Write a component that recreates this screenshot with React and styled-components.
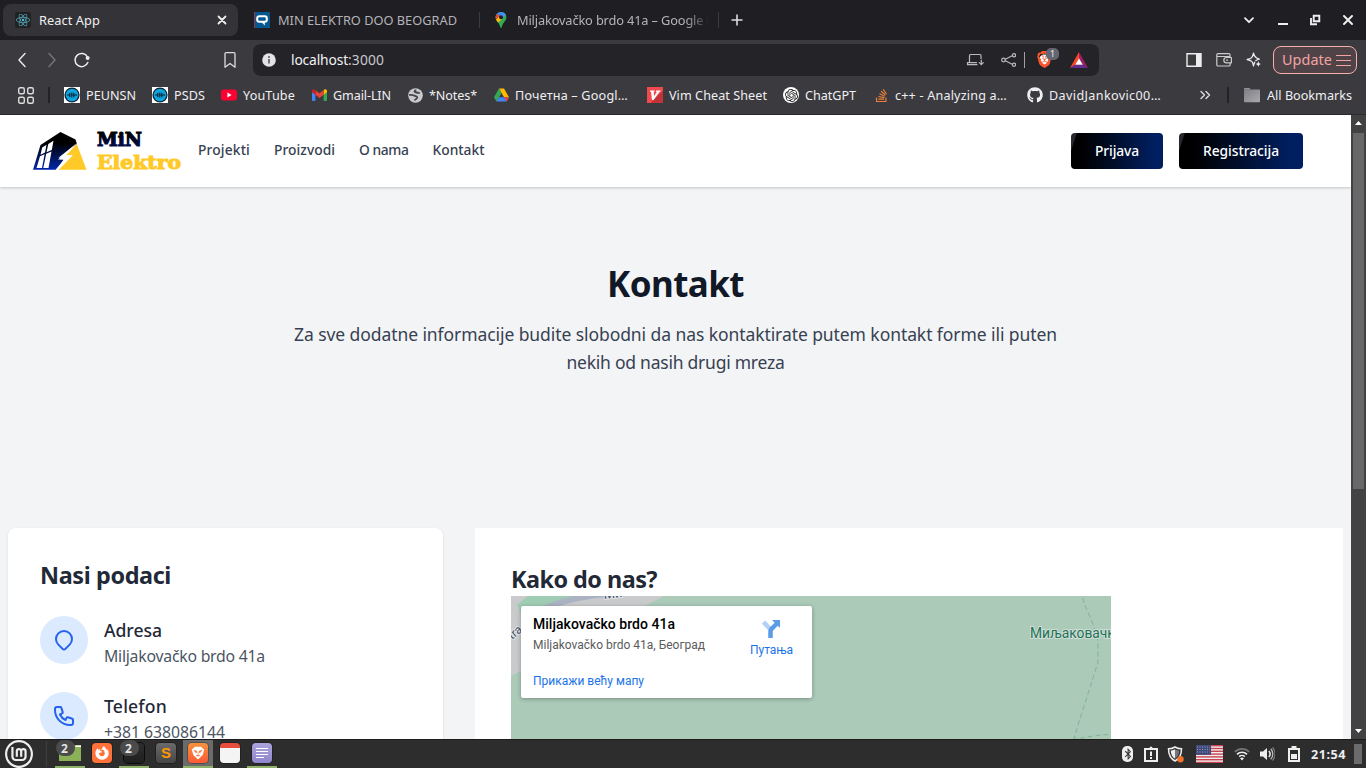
import React, { useLayoutEffect, useRef } from "react";
import styled, { createGlobalStyle, css } from "styled-components";
import { FaReact, FaGithub, FaStackOverflow, FaBluetoothB, FaFirefoxBrowser } from "react-icons/fa";
import { SiBrave, SiLinuxmint, SiOpenai } from "react-icons/si";

const GlobalStyle = createGlobalStyle`
  * { box-sizing: border-box; }
  html, body { margin: 0; padding: 0; }
  body { overflow: hidden; font-family: "Noto Sans", "Open Sans", sans-serif; }
  h1, h2, h3, p { margin: 0; }
  svg { display: block; flex: none; }
`;

/* ---------- text that is tracked to an exact width ---------- */
const Tracked = styled.span`
  display: block;
  flex: none;
  width: ${(p) => p.$width}px;
  white-space: pre;
`;

function Fit({ width, children }) {
  const ref = useRef(null);
  useLayoutEffect(() => {
    const el = ref.current;
    const range = document.createRange();
    range.selectNodeContents(el);
    el.style.letterSpacing = "0px";
    const natural = range.getBoundingClientRect().width;
    el.style.letterSpacing = `${(width - natural) / children.length}px`;
  }, [width, children]);
  return (
    <Tracked ref={ref} $width={width}>
      {children}
    </Tracked>
  );
}

/* ---------- frame ---------- */
const Screen = styled.div`
  width: 1366px;
  height: 768px;
  display: flex;
  flex-direction: column;
  overflow: hidden;
`;

const Spacer = styled.div`
  flex: 1;
`;

/* ---------- browser tabs ---------- */
const TabStrip = styled.div`
  height: 40px;
  flex: none;
  display: flex;
  align-items: center;
  padding-left: 3px;
  background: #1f1e23;
`;

const Tab = styled.div`
  width: ${(p) => p.$width}px;
  height: 32px;
  flex: none;
  display: flex;
  align-items: center;
  gap: 8px;
  padding: 0 10px 0 ${(p) => p.$left}px;
  border-radius: 8px;
  font-size: 12.8px;
  line-height: 18px;
  color: ${(p) => (p.$active ? "#f0f0f2" : "#b4b4b8")};
  background: ${(p) => (p.$active ? "#343438" : "transparent")};
`;

const TabTitle = styled.div`
  flex: 1;
  min-width: 0;
  overflow: hidden;
  ${(p) => p.$fade && css`mask-image: linear-gradient(to right, #000 168px, transparent 194px);`}
`;

const TabDivider = styled.div`
  width: 1px;
  height: 16px;
  flex: none;
  background: #3b3a40;
`;

const ReactBadge = styled.div`
  width: 16px;
  height: 16px;
  flex: none;
  display: grid;
  place-items: center;
  border-radius: 2px;
  background: #222;
  color: #58b5cc;
`;

const NewTab = styled.div`
  padding-left: 12px;
`;

const WindowControls = styled.div`
  display: flex;
  align-items: center;
  gap: 21px;
  padding-right: 12px;
`;

/* ---------- address row ---------- */
const Toolbar = styled.div`
  height: 40px;
  flex: none;
  display: flex;
  align-items: center;
  padding: 0 9px 0 14px;
  background: #3b3a3f;
`;

const NavButtons = styled.div`
  display: flex;
  align-items: center;
  gap: 14px;
  width: 208px;
`;

const AddressBar = styled.div`
  width: 846px;
  height: 32px;
  margin-left: 15px;
  display: flex;
  align-items: center;
  padding: 0 11px 0 9px;
  border-radius: 8px;
  background: #242328;
  font-size: 13.8px;
  color: #c9c9cd;
`;

const UrlText = styled.div`
  display: flex;
  margin: 0 0 2px 15px;
`;

const UrlHost = styled.div`
  color: #f2f2f4;
`;

const AddressIcons = styled.div`
  display: flex;
  align-items: center;
`;

const ShareIcon = styled.svg`
  margin-left: 17px;
`;

const AddressDivider = styled.div`
  width: 1px;
  height: 16px;
  margin: 0 11px 0 8px;
  background: #a0a0a6;
`;

const ShieldWrap = styled.div`
  position: relative;
  width: 17px;
  height: 18px;
  margin-right: 17px;
  color: #fb542b;
  background: radial-gradient(circle at 50% 50%, #fff 5px, transparent 6px);
`;

const ShieldCount = styled.span`
  position: absolute;
  left: 10px;
  top: -3px;
  width: 13px;
  height: 12px;
  border-radius: 5px;
  background: #636570;
  color: #fff;
  font-size: 8px;
  line-height: 12px;
  text-align: center;
`;

const ToolbarIcons = styled.div`
  display: flex;
  align-items: center;
  gap: 14px;
  margin-right: 11px;
`;

const UpdateButton = styled.div`
  width: 84px;
  height: 28px;
  display: flex;
  align-items: center;
  gap: 4px;
  padding: 0 0 1px 8px;
  border: 1px solid #f8aeac;
  border-radius: 8px;
  background: #504348;
  color: #f1a5a3;
  font-size: 14.4px;
  line-height: 20px;
`;

/* ---------- bookmarks ---------- */
const BookmarksBar = styled.div`
  height: 35px;
  flex: none;
  display: flex;
  align-items: center;
  padding: 0 14px 4px 18px;
  border-bottom: 1px solid #2b2a2f;
  background: #3b3a3f;
  color: #f0f0f2;
  font-size: 12.6px;
  line-height: 18px;
`;

const Bookmark = styled.div`
  display: flex;
  align-items: center;
  gap: ${(p) => p.$gap ?? 6}px;
  margin-right: ${(p) => p.$after}px;
`;

const BookmarkLabel = styled.div`
  padding-top: 2px;
`;

const BarDivider = styled.div`
  width: 2px;
  height: 16px;
  margin: 0 ${(p) => p.$right}px 0 ${(p) => p.$left}px;
  background: #232227;
`;

const VimTile = styled.div`
  width: 16px;
  height: 16px;
  background: linear-gradient(135deg, #f04a4e 60%, #c23338 60%);
  color: #fff;
`;

const GptBadge = styled.div`
  width: 16px;
  height: 16px;
  display: grid;
  place-items: center;
  border-radius: 50%;
  background: #fff;
  color: #222;
`;

/* ---------- site ---------- */
const Viewport = styled.div`
  flex: 1;
  min-height: 0;
  display: flex;
`;

const Page = styled.div`
  width: 1351px;
  height: 100%;
  overflow: hidden;
  background: #f3f4f6;
`;

const SiteNav = styled.nav`
  height: 72px;
  display: flex;
  align-items: center;
  padding: 0 48px 0 32px;
  background: #fff;
  box-shadow: 0 1px 3px rgba(0, 0, 0, 0.12), 0 1px 2px rgba(0, 0, 0, 0.08);
  position: relative;
`;

const Links = styled.div`
  display: flex;
  gap: 24px;
  margin: 0 0 2px 16px;
  font-size: 13.8px;
  line-height: 20px;
  font-weight: 500;
  color: #374151;
`;

const NavButton = styled.div`
  height: 36px;
  padding: 0 24px 1px;
  margin-left: 16px;
  display: flex;
  align-items: center;
  border-radius: 4px;
  background: linear-gradient(108deg, #26282b 5px, transparent 6px),
    linear-gradient(to right, #000 12%, #001f60 90%);
  color: #fff;
  font-size: 13.8px;
  line-height: 20px;
  font-weight: 500;
`;

const Hero = styled.header`
  height: 341px;
  padding-top: 77px;
  display: flex;
  flex-direction: column;
  align-items: center;
`;

const HeroTitle = styled.h1`
  font-size: 35px;
  line-height: 40px;
  font-weight: 700;
  color: #111827;
`;

const HeroText = styled.p`
  margin-top: 16px;
  display: flex;
  flex-direction: column;
  align-items: center;
  font-size: 17.5px;
  line-height: 28px;
  color: #374151;
`;

const Columns = styled.main`
  display: flex;
  gap: 32px;
  padding: 0 8px;
`;

const InfoCard = styled.section`
  width: 435px;
  height: 460px;
  padding: 31px 32px;
  border-radius: 8px;
  background: #fff;
  box-shadow: 0 1px 3px rgba(0, 0, 0, 0.1);
`;

const MapCard = styled.section`
  width: 868px;
  height: 560px;
  padding: 35px 36px;
  background: #fff;
`;

const SectionTitle = styled.h2`
  height: 33px;
  font-size: 23.4px;
  line-height: 32px;
  font-weight: 700;
  color: #1f2937;
`;

const InfoList = styled.div`
  margin-top: 24px;
  display: flex;
  flex-direction: column;
  gap: 24px;
`;

const InfoItem = styled.div`
  height: 52px;
  display: flex;
  gap: 16px;
`;

const InfoIcon = styled.div`
  width: 48px;
  height: 48px;
  display: grid;
  place-items: center;
  border-radius: 50%;
  background: #dbeafe;
  color: #2563eb;
`;

const InfoName = styled.h3`
  height: 29px;
  font-size: 17.6px;
  line-height: 28px;
  font-weight: 500;
  color: #1f2937;
`;

const InfoValue = styled.p`
  font-size: 15.8px;
  line-height: 22px;
  color: #4b5563;
`;

const MapFrame = styled.div`
  position: relative;
  width: 600px;
  height: 450px;
  overflow: hidden;
  background: #abcab8;
  font-family: Roboto, sans-serif;
`;

const PlaceCard = styled.div`
  position: absolute;
  left: 10px;
  top: 10px;
  width: 291px;
  height: 92px;
  display: flex;
  justify-content: space-between;
  padding: 9px 19px 0 12px;
  border-radius: 2px;
  background: #fff;
  box-shadow: 0 1px 4px rgba(0, 0, 0, 0.3);
`;

const PlaceName = styled.div`
  font-size: 14px;
  line-height: 18px;
  font-weight: 500;
  color: #000;
`;

const PlaceAddress = styled.div`
  margin-top: 4px;
  font-size: 12px;
  line-height: 16px;
  color: #5b5b5b;
`;

const PlaceLink = styled.div`
  margin-top: ${(p) => p.$top}px;
  font-size: 12px;
  line-height: 16px;
  color: #1a73e8;
`;

const Directions = styled.div`
  display: flex;
  flex-direction: column;
  align-items: center;
  padding-top: 4px;
`;

/* ---------- scrollbar ---------- */
const Scrollbar = styled.div`
  width: 15px;
  display: flex;
  flex-direction: column;
  align-items: center;
  justify-content: space-between;
  padding: 6px 0;
  background: #424242;
`;

const Thumb = styled.div`
  width: 11px;
  height: 356px;
  margin: 8px 0 auto;
  background: #686868;
`;

/* ---------- desktop panel ---------- */
const Panel = styled.div`
  height: 29px;
  flex: none;
  display: flex;
  align-items: center;
  padding: 0 4px;
  border-top: 1px solid #1c1c1c;
  background: #2d2d2d;
`;

const PanelDivider = styled.div`
  width: 1px;
  height: 26px;
  margin: 0 8px 0 12px;
  background: #3e3e3e;
`;

const MintLogo = styled.div`
  width: 30px;
  padding-left: 1px;
  color: #eee;
`;

const TaskSlot = styled.div`
  position: relative;
  width: 30px;
  height: 28px;
  margin-right: 2px;
  display: flex;
  justify-content: center;
  padding-top: 3px;
  background: ${(p) => (p.$focused ? "#6b6b6b" : "transparent")};
  border-bottom: 2px solid ${(p) => (p.$open ? "#8fb26b" : "transparent")};
`;

const TaskIcon = styled.div`
  width: 20px;
  height: 20px;
  flex: none;
  display: grid;
  place-items: center;
  border-radius: 4px;
  background: ${(p) => p.$fill};
  box-shadow: 0 0 0 1px ${(p) => p.$edge || "rgba(0, 0, 0, 0.25)"};
  color: ${(p) => p.$ink || "#fff"};
  font: bold 15px/20px "Liberation Sans", sans-serif;
`;

const TaskCount = styled.span`
  position: absolute;
  left: 1px;
  top: 0;
  width: 19px;
  height: 16px;
  padding-right: 2px;
  border-radius: 8px;
  background: #4b4b4b;
  color: #e4e4e4;
  font: bold 12px/17px "Noto Sans", sans-serif;
  text-align: center;
`;

const Tray = styled.div`
  display: flex;
  align-items: center;
`;

const TrayItem = styled.div`
  margin-right: ${(p) => p.$after}px;
`;

const Bluetooth = styled.div`
  width: 11px;
  height: 16px;
  display: grid;
  place-items: center;
  border-radius: 5px;
  background: #eee;
  color: #2d2d2d;
`;

const Clock = styled.div`
  font-size: 12.6px;
  font-weight: 700;
  color: #eee;
`;

const ShowDesktop = styled.div`
  width: 8px;
  height: 20px;
  margin-left: 8px;
  background: #6b6b6b;
`;

/* ---------- drawings ---------- */
const line = { fill: "none", stroke: "currentColor", strokeLinecap: "round", strokeLinejoin: "round" };

const PeunsnIcon = () => (
  <svg width="16" height="16" viewBox="0 0 16 16">
    <rect width="16" height="16" fill="#fff" />
    <circle cx="8" cy="8" r="7.6" fill="#0d2230" />
    <circle cx="8" cy="8" r="6.3" fill="#10a5e0" />
    <path d="M4 7v2M5.600 6v4M7.200 5.500v5M9.200 5.500v5M10.800 6.500v3M12.200 7v2M7 8h3" stroke="#0d2230" strokeWidth="1" fill="none" />
  </svg>
);

const YouTubeIcon = () => (
  <svg width="16" height="16" viewBox="0 0 16 16">
    <rect y="2.4" width="16" height="11.2" rx="3" fill="#ff0033" />
    <path d="M6.4 5.6v4.8L10.6 8z" fill="#fff" />
  </svg>
);

const GmailIcon = () => (
  <svg width="15" height="16" viewBox="0 0 15 16">
    <path d="M0 4v9a1 1 0 0 0 1 1h2.4V6.5z" fill="#4285f4" />
    <path d="M15 4v9a1 1 0 0 1-1 1h-2.4V6.5z" fill="#34a853" />
    <path d="M11.6 3.4V7.8L15 5.2V4c0-1.6-1.8-2.2-2.8-1.3z" fill="#fbbc04" />
    <path d="M3.4 7.8V3.2l4.1 3.1 4.1-3.1v4.6l-4.1 3.1z" fill="#ea4335" />
    <path d="M0 4v1.2l3.4 2.6V3.2l-.6-.5C1.8 1.9 0 2.5 0 4z" fill="#c5221f" />
  </svg>
);

const GlobeIcon = () => (
  <svg width="15" height="15" viewBox="0 0 15 15">
    <circle cx="7.5" cy="7.5" r="7.3" fill="#c9cacd" />
    <path d="M8.300 2.200C5.800 2.600 6 4.300 8.300 4.500c1.500.2 2.200.6 3.500.3M1.200 7c2-.3 3.600-.2 4.800.5 1.800 1 3.400.6 3.200 2.200-.2 1.500-2 1-2.600 2.800" fill="none" stroke="#47474c" strokeWidth="1.900" />
  </svg>
);

const DriveIcon = () => (
  <svg width="15" height="14" viewBox="0 0 15 14">
    <path d="M5 .6h5l5 8.6h-5z" fill="#ffba00" />
    <path d="M5 .6 0 9.2l2.5 4.2 5-8.5z" fill="#34a853" />
    <path d="M5 9.2h10l-2.5 4.2h-10z" fill="#4285f4" />
    <path d="M10.1 9.2H15l-2.5 4.2z" fill="#ea4335" />
  </svg>
);

const VimIcon = () => (
  <VimTile>
    <svg width="16" height="16" viewBox="0 0 16 16"><path d="M3 3.500h4.500v1.200h-.8l.3 4.600 3-4.600H9V3.500h4.500v1.200h-.9L6.600 13H5L4 4.700H3z" fill="#fff" /></svg>
  </VimTile>
);

const FolderIcon = () => (
  <svg width="18" height="15" viewBox="0 0 18 15">
    <defs>
      <linearGradient id="folder" x1="0" y1="0" x2="1" y2="1">
        <stop offset="0" stopColor="#7f7f86" />
        <stop offset="1" stopColor="#aaaaae" />
      </linearGradient>
    </defs>
    <path d="M1 1.200C1 .6 1.400.2 2 .2h4.500l1 1.300H1z" fill="#b4b4b8" />
    <path d="M1 1.500h15c.6 0 1 .4 1 1v10.700c0 .6-.4 1-1 1H2c-.6 0-1-.4-1-1z" fill="url(#folder)" />
  </svg>
);

const MapsPin = () => (
  <svg width="16" height="16" viewBox="0 0 16 16">
    <path d="M8 0C4.900 0 2.600 2.400 2.600 5.300c0 3.800 3.500 5 4.600 9.500.2.900.4 1.200.8 1.200s.6-.3.8-1.200C9.900 10.300 13.400 9.100 13.400 5.300 13.400 2.400 11.100 0 8 0z" fill="#34a853" />
    <path d="M8 0C6.300 0 4.800.7 3.900 1.900L6.500 4 9.800.3C9.200.1 8.600 0 8 0z" fill="#4285f4" />
    <path d="M3.900 1.900C3 2.900 2.600 4 2.600 5.300c0 1 .2 1.800.6 2.500L6.600 4z" fill="#ea4335" />
    <path d="M3.200 7.800c.5 1 1.200 1.800 1.900 2.700L9.600 6.600 6.400 4z" fill="#fbbc04" />
    <path d="M9.800.3 6.500 4l3.200 2.500L12.800 3C12.200 1.700 11.100.7 9.800.3z" fill="#4a90f5" />
    <circle cx="8" cy="5.300" r="2" fill="#1f1e23" />
  </svg>
);

const ChatIcon = () => (
  <svg width="16" height="16" viewBox="0 0 16 16">
    <rect width="16" height="16" fill="#05588f" />
    <path d="M0 0h1v16H0z" fill="#9c3244" />
    <path d="M5.200 4.200h5.600a2 2 0 0 1 2 2v1.600a2 2 0 0 1-2 2H5.200a2 2 0 0 1-2-2V6.200a2 2 0 0 1 2-2z" fill="none" stroke="#fff" strokeWidth="2" />
    <path d="M7.300 10h3.500v3.400z" fill="#fff" />
  </svg>
);

const BatIcon = () => (
  <svg width="18" height="16" viewBox="0 0 18 16">
    <path d="M9 0 0 16l5.300-3.200L9 6.300z" fill="#ff4724" />
    <path d="M9 0l9 16-5.300-3.200L9 6.300z" fill="#9e1f63" />
    <path d="M0 16h18l-5.300-3.200H5.300z" fill="#662d91" />
    <path d="M9 6.300l3.800 6.500H5.200z" fill="#fff" />
  </svg>
);

const MinLogo = () => (
  <svg width="150" height="42" viewBox="0 0 150 42">
    <defs>
      <linearGradient id="roof" x1="0" y1="0" x2="0" y2="1">
        <stop offset="0.3" stopColor="#000" />
        <stop offset="1" stopColor="#0227ad" />
      </linearGradient>
      <linearGradient id="word" x1="0" y1="0" x2="0" y2="1">
        <stop offset="0.2" stopColor="#000" />
        <stop offset="1" stopColor="#000f5c" />
      </linearGradient>
    </defs>
    <path d="M28.500 2 43.500 9.500 45 14 26 29.500l5.500.3L24 39.800H1L8.500 15z" fill="url(#roof)" />
    <path d="M10.200 17.500 14.500 14.700 13 22.500l-4.500 2.300zM16.300 14l5.200-3.200L19.800 20l-5.300 2.200zM8 26.300l4.600-2L10 38H4.500zM14.200 23.800l5.300-2.200L16.500 38h-5.200z" fill="#fff" />
    <path d="M44.800 14 54.500 39.800H26.200L40.300 25.300l-6-.2z" fill="#ffca28" />
    <path d="M45.500 12.500 26.500 27.800l8 .3-11 11.700h3.300L40.800 25.300l-6.800-.2z" fill="#fff" />
    <text x="65" y="16.200" textLength="45" lengthAdjust="spacingAndGlyphs" fontFamily="'DejaVu Serif', serif" fontWeight="700" fontSize="18.800" fill="url(#word)" stroke="url(#word)" strokeWidth="1.100">MiN</text>
    <text x="65" y="39.200" textLength="84" lengthAdjust="spacingAndGlyphs" fontFamily="'DejaVu Serif', serif" fontWeight="700" fontSize="18.200" fill="#ffca28" stroke="#ffca28" strokeWidth="1">Elektro</text>
  </svg>
);

const MapDrawing = () => (
  <svg width="600" height="450" viewBox="0 0 600 450">
    <path d="M0 0h153L0 80z" fill="#c8cacb" />
    <path d="M17 0h55L33 12 12 20 6 9z" fill="#9fcdb3" />
    <path d="M30 14C52 4 72 0 104 -3" fill="none" stroke="#a9b3c2" strokeWidth="6" />
    <g fontFamily="Roboto, sans-serif" fill="#3d4f66" stroke="#e4e6e8" strokeWidth="2" paintOrder="stroke">
      <text x="93" y="3" fontSize="13" transform="rotate(-6 93 3)">Ми</text>
      <text x="1" y="44" fontSize="12" transform="rotate(-40 1 44)">tra</text>
    </g>
    <g fill="none" stroke="#7fb39c" strokeDasharray="5 3">
      <path d="M572 2c0 8 12 24 15 44v20L563 142h8c12-2 20-4 29-3M563 142l-8 40" />
    </g>
    <text x="519" y="42" fontFamily="Roboto, sans-serif" fontSize="13.800" fill="#1c7455" stroke="#d3ddd8" strokeWidth="2" paintOrder="stroke">Миљаковачка</text>
  </svg>
);

const FlagIcon = () => (
  <svg width="27" height="18" viewBox="0 0 27 18">
    <rect width="27" height="18" fill="#f2eeee" />
    {[0, 2.8, 5.6, 8.4, 11.2, 14, 16.8].map((y) => (
      <rect key={y} y={y} width="27" height="1.400" fill="#c94452" />
    ))}
    <rect width="15" height="9.800" fill="#3f4a7a" />
    <path d="M1 2h13M1 4.500h13M1 7h13" stroke="#aab0cc" strokeWidth="0.800" strokeDasharray="1 1.500" />
  </svg>
);

/* ---------- page ---------- */
const infoItems = [
  {
    name: "Adresa",
    nameWidth: 58,
    value: "Miljakovačko brdo 41a",
    valueWidth: 161,
    path: "M17.657 16.657L13.414 20.9a1.998 1.998 0 01-2.827 0l-4.244-4.243a8 8 0 1111.314 0z",
  },
  {
    name: "Telefon",
    nameWidth: 63,
    value: "+381 638086144",
    valueWidth: 121,
    path: "M3 5a2 2 0 012-2h3.28a1 1 0 01.948.684l1.498 4.493a1 1 0 01-.502 1.21l-2.257 1.13a11.042 11.042 0 005.516 5.516l1.13-2.257a1 1 0 011.21-.502l4.493 1.498a1 1 0 01.684.949V19a2 2 0 01-2 2h-1C9.716 21 3 14.284 3 6V5z",
  },
];

const bookmarks = [
  { label: "PEUNSN", width: 50, after: 16, icon: <PeunsnIcon /> },
  { label: "PSDS", width: 31, after: 16, icon: <PeunsnIcon /> },
  { label: "YouTube", width: 52, after: 17, icon: <YouTubeIcon /> },
  { label: "Gmail-LIN", width: 58, after: 17, icon: <GmailIcon /> },
  { label: "*Notes*", width: 48, after: 17, icon: <GlobeIcon /> },
  { label: "Почетна – Googl…", width: 113, after: 19, icon: <DriveIcon /> },
  { label: "Vim Cheat Sheet", width: 98, after: 16, icon: <VimIcon /> },
  { label: "ChatGPT", width: 51, after: 18, icon: <GptBadge><SiOpenai size={13} /></GptBadge> },
  { label: "c++ - Analyzing a…", width: 112, after: 20, icon: <FaStackOverflow size={15} color="#e8803a" /> },
  { label: "DavidJankovic00…", width: 112, after: 39, icon: <FaGithub size={16} /> },
];

export default function App() {
  return (
    <Screen>
      <GlobalStyle />
      <TabStrip>
        <Tab $active $width={235} $left={12}>
          <ReactBadge><FaReact size={14} /></ReactBadge>
          <TabTitle><Fit width={61}>React App</Fit></TabTitle>
          <svg width="12" height="12" viewBox="0 0 12 12" color="#eee"><path {...line} strokeWidth="1.800" d="M2.500 2.500l7 7M9.500 2.500l-7 7" /></svg>
        </Tab>
        <Tab $width={241} $left={16}>
          <ChatIcon />
          <TabTitle><Fit width={179}>MIN ELEKTRO DOO BEOGRAD</Fit></TabTitle>
        </Tab>
        <TabDivider />
        <Tab $width={238} $left={13}>
          <MapsPin />
          <TabTitle $fade><Fit width={201}>Miljakovačko brdo 41a – Google M</Fit></TabTitle>
        </Tab>
        <TabDivider />
        <NewTab>
          <svg width="12" height="12" viewBox="0 0 12 12" color="#ddd"><path {...line} strokeLinecap="butt" strokeWidth="1.600" d="M6 .5v11M.5 6h11" /></svg>
        </NewTab>
        <Spacer />
        <WindowControls>
          <svg width="12" height="12" viewBox="0 0 12 12" color="#eee"><path {...line} strokeWidth="1.800" d="M2 4.200l4 4 4-4" /></svg>
          <svg width="12" height="12" viewBox="0 0 12 12"><path d="M2 9h10v2H2z" fill="#eee" /></svg>
          <svg width="12" height="12" viewBox="0 0 12 12"><path d="M4.700 1.700h5.600v5.600H4.700zM2 4v6.300h6" fill="none" stroke="#eee" strokeWidth="1.900" /></svg>
          <svg width="12" height="12" viewBox="0 0 12 12" color="#eee"><path {...line} strokeWidth="2" d="M2 2l8 8M10 2l-8 8" /></svg>
        </WindowControls>
      </TabStrip>

      <Toolbar>
        <NavButtons>
          <svg width="16" height="16" viewBox="0 0 16 16" color="#eee"><path {...line} strokeWidth="1.400" d="M11 1.500L5 8l6 6.500" /></svg>
          <svg width="16" height="16" viewBox="0 0 16 16" color="#77767b"><path {...line} strokeWidth="1.400" d="M5 1.500L11 8l-6 6.500" /></svg>
          <svg width="16" height="16" viewBox="0 0 16 16" color="#eee"><path {...line} strokeWidth="1.500" d="M13.800 10.500A6.600 6.600 0 1 1 13.500 5" /><circle cx="13.600" cy="6" r="2" fill="#eee" /></svg>
        </NavButtons>
        <svg width="16" height="18" viewBox="0 0 16 18" color="#ddd"><path {...line} strokeWidth="1.300" d="M3 2.800c0-.8.500-1.200 1.200-1.200h7.600c.7 0 1.200.4 1.200 1.200V16.200l-5-3.700-5 3.700z" /></svg>
        <AddressBar>
          <svg width="14" height="14" viewBox="0 0 14 14"><circle cx="7" cy="7" r="6.800" fill="#e3e3e6" /><path d="M7 6v4.600" fill="none" stroke="#55545a" strokeWidth="1.600" /><circle cx="7" cy="3.900" r="1" fill="#55545a" /></svg>
          <UrlText>
            <UrlHost><Fit width={57}>localhost</Fit></UrlHost>
            <Fit width={36}>:3000</Fit>
          </UrlText>
          <Spacer />
          <AddressIcons>
            <svg width="18" height="14" viewBox="0 0 18 14" color="#b9b9be"><path {...line} strokeWidth="1.200" d="M3.500 9.500V2.500c0-.6.300-1 1-1h9.500c.6 0 1 .4 1 1v3M1.500 11.700h9.500M1.500 11.700V9.700h9M15.300 7v4.700M13.300 9.700l2 2 2-2" /></svg>
            <ShareIcon width="15" height="14" viewBox="0 0 15 14" color="#b9b9be"><path {...line} strokeWidth="1.100" d="M4.300 6.200 11.200 2.700M4.300 7.800l6.900 3.500" /><circle {...line} strokeWidth="1.200" cx="2.500" cy="7" r="1.800" /><circle {...line} strokeWidth="1.200" cx="13" cy="2.300" r="1.600" /><circle {...line} strokeWidth="1.200" cx="13" cy="11.700" r="1.600" /></ShareIcon>
            <AddressDivider />
            <ShieldWrap><SiBrave size={17} /><ShieldCount>1</ShieldCount></ShieldWrap>
            <BatIcon />
          </AddressIcons>
        </AddressBar>
        <Spacer />
        <ToolbarIcons>
          <svg width="16" height="16" viewBox="0 0 16 16"><path d="M1 1.700h14v12.600H1z" fill="none" stroke="#eee" strokeWidth="1.400" /><path d="M10 1.500h5v13h-5z" fill="#eee" /></svg>
          <svg width="16" height="16" viewBox="0 0 16 16" color="#ccc"><path {...line} strokeWidth="1.200" d="M14 5V3c0-.8-.5-1.300-1.300-1.300H2C1.300 1.700.8 2.200.8 3v9.700c0 .8.500 1.300 1.300 1.300h10.700c.8 0 1.300-.5 1.300-1.300V11M1 4.500h13M15.400 5.500v5.300H10.500a2.600 2.600 0 0 1 0-5.300zM10.500 8.200h1" /></svg>
          <svg width="16" height="16" viewBox="0 0 16 16" color="#eee"><path {...line} strokeWidth="1.300" d="M7.500 1.200c.8 3.700 2 5 5.800 5.900M7.500 1.200c-.8 4.200-2 5.400-6.300 6.300 4.300.9 5.500 2.100 6.300 6.300.3-1.500.7-2.700 1.300-3.600M13.300 7.100c-1.500.4-2.600.9-3.400 1.500" /><path d="M12.300 8.900c.4 2 1.100 2.700 3.100 3.100-2 .4-2.700 1.100-3.100 3.100-.4-2-1.100-2.700-3.100-3.100 2-.4 2.700-1.100 3.100-3.100z" fill="#eee" /></svg>
        </ToolbarIcons>
        <UpdateButton>
          <Fit width={50}>Update</Fit>
          <svg width="15" height="12" viewBox="0 0 15 12"><path d="M0 1.500h15M0 6.500h15M0 11.500h15" stroke="#f1a5a3" /></svg>
        </UpdateButton>
      </Toolbar>

      <BookmarksBar>
        <svg width="16" height="17" viewBox="0 0 16 17" color="#ddd"><g {...line} strokeWidth="1.400"><rect x=".7" y=".7" width="5.600" height="6" rx="1.500" /><rect x="9.700" y=".7" width="5.600" height="6" rx="1.500" /><rect x=".7" y="10.200" width="5.600" height="6" rx="1.500" /><rect x="9.700" y="10.200" width="5.600" height="6" rx="1.500" /></g></svg>
        <BarDivider $left={14} $right={14} />
        {bookmarks.map((b) => (
          <Bookmark key={b.label} $after={b.after}>
            {b.icon}
            <BookmarkLabel><Fit width={b.width}>{b.label}</Fit></BookmarkLabel>
          </Bookmark>
        ))}
        <svg width="11" height="10" viewBox="0 0 11 10" color="#ddd"><path {...line} strokeWidth="1.400" d="M1 1.500l3.500 3.500L1 8.500M6 1.500l3.500 3.500L6 8.500" /></svg>
        <Spacer />
        <BarDivider $left={0} $right={14} />
        <Bookmark $after={0}>
          <FolderIcon />
          <BookmarkLabel><Fit width={85}>All Bookmarks</Fit></BookmarkLabel>
        </Bookmark>
      </BookmarksBar>

      <Viewport>
        <Page>
          <SiteNav>
            <MinLogo />
            <Links>
              <Fit width={52}>Projekti</Fit>
              <Fit width={61}>Proizvodi</Fit>
              <Fit width={49.5}>O nama</Fit>
              <Fit width={52}>Kontakt</Fit>
            </Links>
            <Spacer />
            <NavButton><Fit width={44}>Prijava</Fit></NavButton>
            <NavButton><Fit width={76}>Registracija</Fit></NavButton>
          </SiteNav>
          <Hero>
            <HeroTitle><Fit width={137}>Kontakt</Fit></HeroTitle>
            <HeroText>
              <Fit width={763}>Za sve dodatne informacije budite slobodni da nas kontaktirate putem kontakt forme ili puten</Fit>
              <Fit width={218}>nekih od nasih drugi mreza</Fit>
            </HeroText>
          </Hero>
          <Columns>
            <InfoCard>
              <SectionTitle><Fit width={131}>Nasi podaci</Fit></SectionTitle>
              <InfoList>
                {infoItems.map((item) => (
                  <InfoItem key={item.name}>
                    <InfoIcon>
                      <svg width="24" height="24" viewBox="0 0 24 24"><path {...line} strokeWidth="2" d={item.path} /></svg>
                    </InfoIcon>
                    <div>
                      <InfoName><Fit width={item.nameWidth}>{item.name}</Fit></InfoName>
                      <InfoValue><Fit width={item.valueWidth}>{item.value}</Fit></InfoValue>
                    </div>
                  </InfoItem>
                ))}
              </InfoList>
            </InfoCard>
            <MapCard>
              <SectionTitle><Fit width={146}>Kako do nas?</Fit></SectionTitle>
              <MapFrame>
                <MapDrawing />
                <PlaceCard>
                  <div>
                    <PlaceName><Fit width={142}>Miljakovačko brdo 41a</Fit></PlaceName>
                    <PlaceAddress><Fit width={172}>Miljakovačko brdo 41a, Београд</Fit></PlaceAddress>
                    <PlaceLink $top={20}><Fit width={111}>Прикажи већу мапу</Fit></PlaceLink>
                  </div>
                  <Directions>
                    <svg width="20" height="20" viewBox="0 0 20 20"><path d="M1.500 3 9 11" stroke="#b3d0f6" strokeWidth="4.500" /><path d="M8.500 19v-6.500c0-1.500.5-2.200 1.500-3.200L15 4.500" fill="none" stroke="#5c9ce6" strokeWidth="4.500" /><path d="M10 1h8v8z" fill="#5c9ce6" /></svg>
                    <PlaceLink $top={3}><Fit width={43}>Путања</Fit></PlaceLink>
                  </Directions>
                </PlaceCard>
              </MapFrame>
            </MapCard>
          </Columns>
        </Page>
        <Scrollbar>
          <svg width="7" height="4" viewBox="0 0 7 4"><path d="M0 4h7L3.500 0z" fill="#fff" /></svg>
          <Thumb />
          <svg width="7" height="4" viewBox="0 0 7 4"><path d="M0 0h7L3.500 4z" fill="#fff" /></svg>
        </Scrollbar>
      </Viewport>

      <Panel>
        <MintLogo><SiLinuxmint size={28} /></MintLogo>
        <PanelDivider />
        <TaskSlot $open>
          <svg width="22" height="20" viewBox="0 0 22 20"><path d="M0 5h12l3-3h7v16H0z" fill="#8bb158" /><path d="M17 2.500h5v1.500h-6z" fill="#fff" /></svg>
          <TaskCount>2</TaskCount>
        </TaskSlot>
        <TaskSlot><TaskIcon $fill="#ff7139"><FaFirefoxBrowser size={14} /></TaskIcon></TaskSlot>
        <TaskSlot $open><TaskIcon $fill="linear-gradient(#2e2e2e, #1f1f1f)" $edge="#0c0c0c" /><TaskCount>2</TaskCount></TaskSlot>
        <TaskSlot><TaskIcon $fill="linear-gradient(#6a6a6a, #464646)" $ink="#ff9800">S</TaskIcon></TaskSlot>
        <TaskSlot $open $focused>
          <TaskIcon $fill="linear-gradient(#f7923a, #fb5a35)">
            <svg width="14" height="14" viewBox="0 0 14 14"><path d="M4 .8h6l3.200 2.700-1.500 5.500L7 13.400 2.300 9 .8 3.500z" fill="#fff" /><path d="M3 4.200l3 1-.8 1.700zM11 4.200l-3 1 .8 1.700zM5 9l2 1.200L9 9M7 6v3" fill="#f9743a" stroke="#f9743a" strokeWidth=".6" /></svg>
          </TaskIcon>
        </TaskSlot>
        <TaskSlot><TaskIcon $fill="linear-gradient(#e74c3c 5px, #f4f4f4 5px)" /></TaskSlot>
        <TaskSlot $open>
          <TaskIcon $fill="linear-gradient(#aca4dc, #8f86cc)">
            <svg width="12" height="12" viewBox="0 0 12 12"><path d="M0 1.500h12M0 4.500h12M0 7.500h12M0 10.500h8" stroke="#fff" strokeWidth="1.200" /></svg>
          </TaskIcon>
        </TaskSlot>
        <Spacer />
        <Tray>
          <TrayItem $after={11}><Bluetooth><FaBluetoothB size={12} /></Bluetooth></TrayItem>
          <TrayItem $after={9}>
            <svg width="14" height="16" viewBox="0 0 14 16"><path d="M1 3h12v12H1z" fill="none" stroke="#eee" strokeWidth="2" /><path d="M4 3.500V2h1.500a1.500 1.500 0 0 1 3 0H10v1.500z" fill="#eee" /><path d="M6 5.500h2V10H6zM6 11h2v2H6z" fill="#eee" /></svg>
          </TrayItem>
          <TrayItem $after={12}>
            <svg width="17" height="17" viewBox="0 0 17 17"><path d="M8 1C6 2.300 3.500 2.800 1.500 2.800 1.500 8 3 12.500 8 15c5-2.500 6.500-7 6.500-12.200C12.500 2.800 10 2.300 8 1z" fill="none" stroke="#eee" strokeWidth="1.500" /><path d="M8 3.300C6.500 4.200 5 4.500 3.700 4.600 3.900 8 5 11 8 12.800z" fill="#eee" /><path d="M8 3.300c1.500.9 3 1.200 4.300 1.300C12.100 8 11 11 8 12.800z" fill="#777" /><circle cx="13.500" cy="13.200" r="3.200" fill="#f37329" /></svg>
          </TrayItem>
          <TrayItem $after={11}><FlagIcon /></TrayItem>
          <TrayItem $after={10}>
            <svg width="16" height="14" viewBox="0 0 16 14"><path d="M.8 4.800a10.500 10.500 0 0 1 14.400 0" fill="none" stroke="#777" strokeWidth="1.800" /><path d="M3 7.300a7.200 7.200 0 0 1 10 0M5.200 9.600a4 4 0 0 1 5.600 0" fill="none" stroke="#eee" strokeWidth="1.600" /><path d="M6 11.300a3 3 0 0 1 4 0L8 13.500z" fill="#eee" /></svg>
          </TrayItem>
          <TrayItem $after={13}>
            <svg width="15" height="14" viewBox="0 0 15 14"><path d="M0 4.500h3L7 1v12L3 9.500H0z" fill="#eee" /><path d="M8.800 4a4.500 4.500 0 0 1 0 6" fill="none" stroke="#eee" strokeWidth="1.500" /><path d="M10.700 1.800a7.500 7.500 0 0 1 0 10.400" fill="none" stroke="#bbb" strokeWidth="1.300" /><path d="M12.500.5a9.500 9.500 0 0 1 0 13" fill="none" stroke="#777" strokeWidth="1.300" /></svg>
          </TrayItem>
          <TrayItem $after={11}>
            <svg width="12" height="16" viewBox="0 0 12 16"><path d="M1 3h10v12H1z" fill="none" stroke="#eee" strokeWidth="2" /><path d="M3.500 0h5v3h-5z" fill="#eee" /><path d="M3 8h6v5H3z" fill="#eee" /></svg>
          </TrayItem>
          <Clock><Fit width={35}>21:54</Fit></Clock>
          <ShowDesktop />
        </Tray>
      </Panel>
    </Screen>
  );
}
